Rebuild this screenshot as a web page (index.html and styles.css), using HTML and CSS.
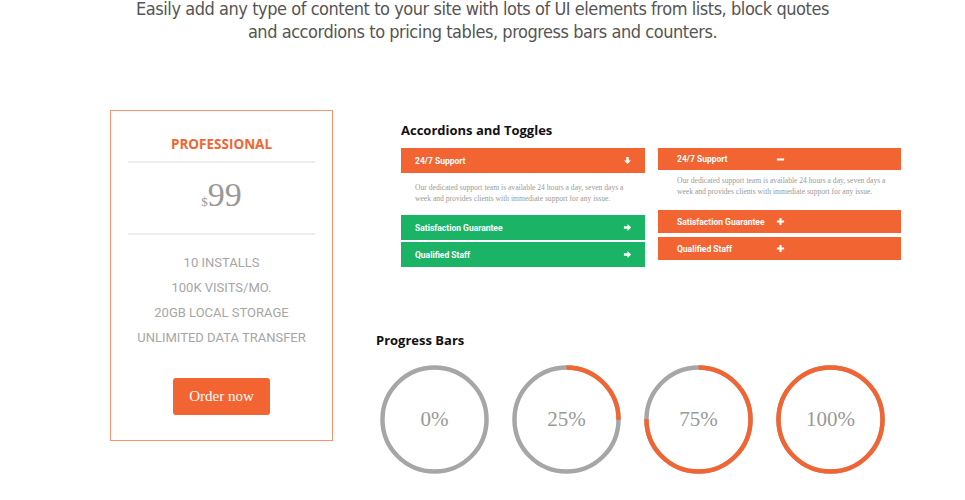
FILE: index.html
```html
<!DOCTYPE html>
<html lang="en">
<head>
    <meta charset="UTF-8">
    <meta name="viewport" content="width=device-width, initial-scale=1.0">
    <title>UI Elements</title>
    <link rel="stylesheet" href="styles.css">
</head>
<body>
    <p class="intro">Easily add any type of content to your site with lots of UI elements from lists, block quotes<br>and accordions to pricing tables, progress bars and counters.</p>

    <div class="showcase">
        <div class="pricing">
            <h3 class="plan">PROFESSIONAL</h3>
            <div class="price"><span class="currency">$</span>99</div>
            <ul class="features">
                <li>10 Installs</li>
                <li>100K Visits/Mo.</li>
                <li>20GB Local Storage</li>
                <li>Unlimited Data Transfer</li>
            </ul>
            <button class="order">Order now</button>
        </div>

        <div class="elements">
            <div class="accordions">
                <h2>Accordions and Toggles</h2>
                <div class="acc-cols">
                    <div class="accordion">
                        <div class="acc-head">
                            <span class="acc-title">24/7 Support</span>
                            <svg class="icon" viewBox="0 0 10 10"><path d="M3.6 1h2.8v4h2.4L5 9 1.2 5h2.4z" fill="#fff"/></svg>
                        </div>
                        <p class="acc-body">Our dedicated support team is available 24 hours a day, seven days a week and provides clients with immediate support for any issue.</p>
                        <div class="acc-head green">
                            <span class="acc-title">Satisfaction Guarantee</span>
                            <svg class="icon" viewBox="0 0 10 10"><path d="M1 3.6h4V1.2L9 5 5 8.8V6.4H1z" fill="#fff"/></svg>
                        </div>
                        <div class="acc-head green">
                            <span class="acc-title">Qualified Staff</span>
                            <svg class="icon" viewBox="0 0 10 10"><path d="M1 3.6h4V1.2L9 5 5 8.8V6.4H1z" fill="#fff"/></svg>
                        </div>
                    </div>

                    <div class="accordion toggles">
                        <div class="acc-head">
                            <span class="acc-title">24/7 Support</span>
                            <svg class="icon" viewBox="0 0 10 10"><path d="M1 3.8h8v2.4H1z" fill="#fff"/></svg>
                        </div>
                        <p class="acc-body">Our dedicated support team is available 24 hours a day, seven days a week and provides clients with immediate support for any issue.</p>
                        <div class="acc-head">
                            <span class="acc-title">Satisfaction Guarantee</span>
                            <svg class="icon" viewBox="0 0 10 10"><path d="M3.8 1h2.4v2.8H9v2.4H6.2V9H3.8V6.2H1V3.8h2.8z" fill="#fff"/></svg>
                        </div>
                        <div class="acc-head">
                            <span class="acc-title">Qualified Staff</span>
                            <svg class="icon" viewBox="0 0 10 10"><path d="M3.8 1h2.4v2.8H9v2.4H6.2V9H3.8V6.2H1V3.8h2.8z" fill="#fff"/></svg>
                        </div>
                    </div>
                </div>
            </div>

            <h2 class="bars-title">Progress Bars</h2>
            <div class="circles">
                <div class="circle">
                    <svg viewBox="0 0 110 110"><circle class="track" cx="55" cy="55" r="52.5"/><circle class="fill" cx="55" cy="55" r="52.5" stroke-dasharray="0 330"/></svg>
                    <span class="pct">0%</span>
                </div>
                <div class="circle">
                    <svg viewBox="0 0 110 110"><circle class="track" cx="55" cy="55" r="52.5"/><circle class="fill" cx="55" cy="55" r="52.5" stroke-dasharray="82.5 330"/></svg>
                    <span class="pct">25%</span>
                </div>
                <div class="circle">
                    <svg viewBox="0 0 110 110"><circle class="track" cx="55" cy="55" r="52.5"/><circle class="fill" cx="55" cy="55" r="52.5" stroke-dasharray="247.4 330"/></svg>
                    <span class="pct">75%</span>
                </div>
                <div class="circle">
                    <svg viewBox="0 0 110 110"><circle class="track" cx="55" cy="55" r="52.5"/><circle class="fill" cx="55" cy="55" r="52.5" stroke-dasharray="330 330"/></svg>
                    <span class="pct">100%</span>
                </div>
            </div>
        </div>
    </div>
</body>
</html>
```

FILE: styles.css
```css
body {
    margin: 0;
    padding: 0;
    background-color: #fff;
    font-family: "Open Sans", sans-serif;
    overflow: hidden;
}
.intro {
    margin: -3px 0 0;
    font-family: "Liberation Sans Narrow", "DejaVu Sans Condensed", sans-serif;
    font-stretch: condensed;
    font-size: 18px;
    line-height: 23px;
    letter-spacing: -0.45px;
    color: #555;
    text-align: center;
}
.showcase {
    display: flex;
    padding: 67px 0 0 110px;
}
.pricing {
    width: 221px;
    height: 305px;
    border: 1px solid #f7936d;
    text-align: center;
    padding-top: 24px;
    box-sizing: content-box;
}
.plan {
    margin: 0 17px;
    padding-bottom: 8px;
    border-bottom: 2px solid #eee;
    color: #f26532;
    font-size: 13.5px;
    font-weight: 700;
}
.price {
    margin: 0 17px;
    padding: 12px 0 11px;
    border-bottom: 2px solid #eee;
    font-family: "Liberation Serif", serif;
    font-size: 34px;
    line-height: 40px;
    color: #999;
}
.currency {
    font-size: 13px;
}
.features {
    list-style: none;
    margin: 0;
    padding: 15px 0 0;
    font-family: Roboto, sans-serif;
    font-size: 13px;
    line-height: 25px;
    color: #a6a6a6;
    text-transform: uppercase;
}
.order {
    margin-top: 28px;
    width: 97px;
    height: 37px;
    border: none;
    border-radius: 3px;
    background-color: #f26532;
    color: #fff;
    font-family: "Liberation Serif", serif;
    font-size: 15px;
    cursor: pointer;
}
.elements {
    margin-left: 43px;
}
.accordions {
    padding-left: 25px;
    padding-top: 11px;
}
h2 {
    margin: 0;
    font-size: 13px;
    font-weight: 700;
    color: #111;
    line-height: 18px;
}
.acc-cols {
    display: flex;
    gap: 13px;
    margin-top: 9px;
}
.accordion {
    width: 244px;
}
.acc-head {
    display: flex;
    align-items: center;
    justify-content: space-between;
    height: 25px;
    padding: 0 13px 0 14px;
    background-color: #f26532;
    color: #fff;
    font-family: Roboto, sans-serif;
    font-size: 8.5px;
    font-weight: 700;
    margin-bottom: 2px;
}
.acc-head.green {
    background-color: #1bb467;
}
.icon {
    width: 9px;
    height: 9px;
}
.acc-body {
    margin: 0;
    padding: 7px 14px 11px;
    font-family: "Liberation Serif", serif;
    font-size: 7.6px;
    line-height: 11px;
    color: #9a9a9a;
}
.toggles {
    width: 243px;
}
.toggles .acc-head {
    height: 23px;
    justify-content: flex-start;
    padding-left: 19px;
    margin-bottom: 4px;
}
.toggles .acc-head:first-child {
    height: 22px;
    margin-bottom: 0;
}
.toggles .acc-title {
    width: 99px;
}
.toggles .acc-body {
    padding: 5px 12px 13px 19px;
}
.bars-title {
    margin-top: 62px;
}
.circles {
    display: flex;
    gap: 23px;
    padding: 16px 0 0 4px;
}
.circle {
    position: relative;
    width: 109px;
    height: 109px;
}
.circle svg {
    width: 109px;
    height: 109px;
    transform: rotate(-90deg);
}
.track, .fill {
    fill: none;
    stroke-width: 4.5;
}
.track {
    stroke: #a6a6a6;
}
.fill {
    stroke: #f26532;
}
.pct {
    position: absolute;
    inset: 0;
    display: flex;
    align-items: center;
    justify-content: center;
    font-family: "Liberation Serif", serif;
    font-size: 21px;
    color: #999;
}
```
